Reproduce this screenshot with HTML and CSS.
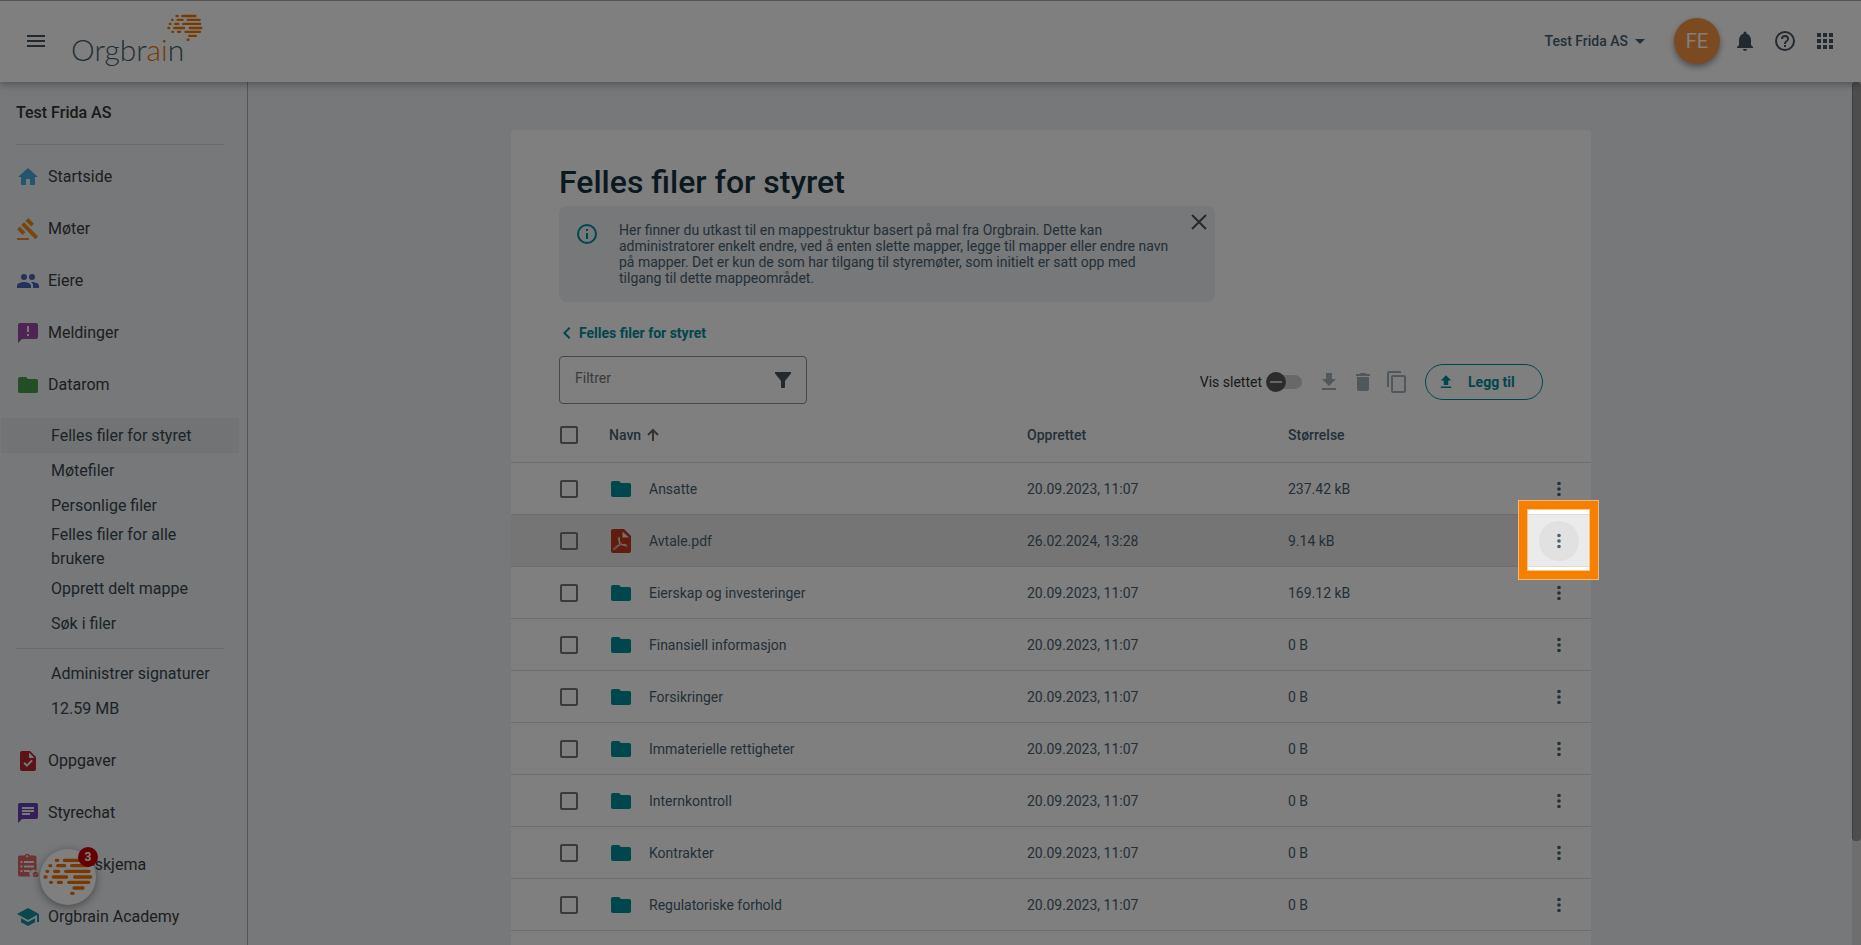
FILE: index.html
```html
<!DOCTYPE html>
<html lang="no">
<head>
<meta charset="utf-8">
<title>Felles filer for styret – Orgbrain</title>
<link rel="stylesheet" href="styles.css">
</head>
<body>
<svg class="defs" aria-hidden="true">
  <symbol id="brain" viewBox="130 415 150 112"><path fill="none" stroke="currentColor" stroke-width="10" stroke-linecap="round" d="M170 421h4M194 421h54M151 437h2M174 437h21M216 437h50M142 454h2M165 454h12M198 454h70M136 471h3M161 471h40M225 471h48M153 487h2M176 487h9M207 487h60M223 504h27M216 520h4"/></symbol>
  <symbol id="folder" viewBox="0 0 24 24"><path d="M10 4H4a2 2 0 0 0-2 2v12a2 2 0 0 0 2 2h16a2 2 0 0 0 2-2V8a2 2 0 0 0-2-2h-8z"/></symbol>
  <symbol id="dots" viewBox="0 0 24 24"><path d="M12 8a2 2 0 1 0 0-4 2 2 0 0 0 0 4zm0 2a2 2 0 1 0 0 4 2 2 0 0 0 0-4zm0 6a2 2 0 1 0 0 4 2 2 0 0 0 0-4z"/></symbol>
</svg>

<header class="topbar">
  <button class="icon-btn" aria-label="Meny"><svg class="icon" viewBox="0 0 24 24"><path d="M3 18h18v-2H3zm0-5h18v-2H3zm0-7v2h18V6z"/></svg></button>
  <a class="logo" href="#" aria-label="Orgbrain"><span>Orgbr<em>ai</em>n</span><svg class="logo-brain"><use href="#brain"/></svg></a>
  <button class="company">Test Frida AS<svg class="icon" viewBox="0 0 24 24"><path d="M7 10l5 5 5-5z"/></svg></button>
  <button class="avatar">FE</button>
  <div class="top-icons">
    <button class="icon-btn" aria-label="Varsler"><svg class="icon" viewBox="0 0 24 24"><path d="M12 22a2 2 0 0 0 2-2h-4a2 2 0 0 0 2 2zm6-6v-5c0-3.07-1.64-5.64-4.5-6.32V4a1.5 1.5 0 0 0-3 0v.68C7.63 5.36 6 7.92 6 11v5l-2 2v1h16v-1z"/></svg></button>
    <button class="icon-btn" aria-label="Hjelp"><svg class="icon" viewBox="0 0 24 24"><path d="M11 18h2v-2h-2zm1-16a10 10 0 1 0 0 20 10 10 0 0 0 0-20zm0 18a8 8 0 1 1 0-16 8 8 0 0 1 0 16zm0-14a4 4 0 0 0-4 4h2a2 2 0 1 1 4 0c0 2-3 1.75-3 5h2c0-2.250 3-2.500 3-5a4 4 0 0 0-4-4z"/></svg></button>
    <button class="icon-btn" aria-label="Apper"><svg class="icon" viewBox="0 0 24 24"><path d="M4 8h4V4H4zm6 12h4v-4h-4zm-6 0h4v-4H4zm0-6h4v-4H4zm6 0h4v-4h-4zm6-10v4h4V4zm-6 4h4V4h-4zm6 6h4v-4h-4zm0 6h4v-4h-4z"/></svg></button>
  </div>
</header>

<div class="layout">
  <nav class="sidebar">
    <h2>Test Frida AS</h2>
    <hr>
    <a class="item" href="#"><svg class="icon c-home" viewBox="0 0 24 24"><path d="M10 20v-6h4v6h5v-8h3L12 3 2 12h3v8z"/></svg>Startside</a>
    <a class="item" href="#"><svg class="icon c-gavel" viewBox="0 0 24 24"><path d="M1 21h12v2H1zM5.240 8.070l2.830-2.830 14.140 14.140-2.830 2.830zM12.320 1l5.660 5.660-2.830 2.830-5.660-5.660zM3.830 9.480l5.660 5.660-2.830 2.830L1 12.310z"/></svg>Møter</a>
    <a class="item" href="#"><svg class="icon c-people" viewBox="0 0 24 24"><path d="M16 11a3 3 0 1 0-3-3 3 3 0 0 0 3 3zm-8 0a3 3 0 1 0-3-3 3 3 0 0 0 3 3zm0 2c-2.330 0-7 1.170-7 3.500V19h14v-2.500C15 14.170 10.330 13 8 13zm8 0c-.290 0-.620.020-.970.050 1.160.840 1.970 1.970 1.970 3.450V19h6v-2.500c0-2.330-4.670-3.500-7-3.500z"/></svg>Eiere</a>
    <a class="item" href="#"><svg class="icon c-msg" viewBox="0 0 24 24"><path d="M20 2H4a2 2 0 0 0-2 2v18l4-4h14a2 2 0 0 0 2-2V4a2 2 0 0 0-2-2z"/><path class="cut" d="M11 13h2v2h-2zM11 5h2v6h-2z"/></svg>Meldinger</a>
    <a class="item" href="#"><svg class="icon c-data"><use href="#folder"/></svg>Datarom</a>
    <div class="submenu">
      <a class="active" href="#">Felles filer for styret</a>
      <a href="#">Møtefiler</a>
      <a href="#">Personlige filer</a>
      <a class="tall" href="#">Felles filer for alle brukere</a>
      <a href="#">Opprett delt mappe</a>
      <a href="#">Søk i filer</a>
      <hr>
      <a href="#">Administrer signaturer</a>
      <a href="#">12.59 MB</a>
    </div>
    <a class="item" href="#"><svg class="icon c-task" viewBox="0 0 24 24"><path d="M14 2H6a2 2 0 0 0-2 2v16a2 2 0 0 0 2 2h12a2 2 0 0 0 2-2V8z"/><path class="cut" d="M10.900 18l-3.500-3.500 1.400-1.400 2.100 2.100 4.500-4.500 1.400 1.400zM13 9V3.500L18.500 9z"/></svg>Oppgaver</a>
    <a class="item" href="#"><svg class="icon c-chat" viewBox="0 0 24 24"><path d="M20 2H4a2 2 0 0 0-2 2v18l4-4h14a2 2 0 0 0 2-2V4a2 2 0 0 0-2-2z"/><path class="cut" d="M6 6h12v2H6zM6 9h12v2H6zM6 12h8v2H6z"/></svg>Styrechat</a>
    <a class="item" href="#"><svg class="icon c-form" viewBox="0 0 24 24"><path fill-rule="evenodd" d="M18.500 2.500H14a3 3 0 0 0-5.500 0H4a2 2 0 0 0-2 2v17a2 2 0 0 0 2 2h10.500a4 4 0 0 1 6-5.500V4.500a2 2 0 0 0-2-2zM11.200 2.200a1 1 0 1 1 0 2 1 1 0 0 1 0-2zM4.500 8h2v2h-2zm0 4.500h2v2h-2zm0 4.500h2v2h-2zM8 8h10v2H8zm0 4.500h10v2H8zM8 17h6v2H8z"/><circle cx="19.500" cy="21.500" r="2.800"/><path d="M18 21.500l1 1 2-2" fill="none" stroke="#edf0f3" stroke-width="1"/></svg>Spørreskjema</a>
    <a class="item" href="#"><svg class="icon c-academy" viewBox="0 0 24 24"><path d="M5 13.180v4L12 21l7-3.820v-4L12 17zM12 3L1 9l11 6 9-4.910V17h2V9z"/></svg>Orgbrain Academy</a>
  </nav>

  <main class="main">
    <section class="card">
      <div class="head">
        <h1>Felles filer for styret</h1>
        <div class="info">
          <svg class="icon info-icon" viewBox="0 0 24 24"><path d="M11 7h2v2h-2zm0 4h2v6h-2zm1-9a10 10 0 1 0 0 20 10 10 0 0 0 0-20zm0 18a8 8 0 1 1 0-16 8 8 0 0 1 0 16z"/></svg>
          <p>Her finner du utkast til en mappestruktur basert på mal fra Orgbrain. Dette kan administratorer enkelt endre, ved å enten slette mapper, legge til mapper eller endre navn på mapper. Det er kun de som har tilgang til styremøter, som initielt er satt opp med tilgang til dette mappeområdet.</p>
          <button class="icon-btn close" aria-label="Lukk"><svg class="icon" viewBox="0 0 24 24"><path d="M5 5l14 14M19 5L5 19" fill="none" stroke="currentColor" stroke-width="2"/></svg></button>
        </div>
        <a class="crumb" href="#"><svg class="icon" viewBox="0 0 24 24"><path d="M15.400 7.400L14 6l-6 6 6 6 1.400-1.400L10.800 12z"/></svg>Felles filer for styret</a>
        <div class="toolbar">
          <label class="filter"><input type="text" placeholder="Filtrer" aria-label="Filtrer"><svg class="icon" viewBox="0 0 24 24"><path d="M4 4h16v1.500L14 13v6a1 1 0 0 1-1 1h-2a1 1 0 0 1-1-1v-6L4 5.500z"/></svg></label>
          <div class="actions">
            <label class="toggle">Vis slettet<input type="checkbox"></label>
            <button class="icon-btn" aria-label="Last ned"><svg class="icon" viewBox="0 0 24 24"><path d="M19 9h-4V3H9v6H5l7 7zM5 18v2h14v-2z"/></svg></button>
            <button class="icon-btn" aria-label="Slett"><svg class="icon" viewBox="0 0 24 24"><path d="M6 19a2 2 0 0 0 2 2h8a2 2 0 0 0 2-2V7H6zM19 4h-3.500l-1-1h-5l-1 1H5v2h14z"/></svg></button>
            <button class="icon-btn" aria-label="Kopier"><svg class="icon" viewBox="0 0 24 24"><path d="M16 1H4a2 2 0 0 0-2 2v14h2V3h12zm3 4H8a2 2 0 0 0-2 2v14a2 2 0 0 0 2 2h11a2 2 0 0 0 2-2V7a2 2 0 0 0-2-2zm0 16H8V7h11z"/></svg></button>
            <button class="add"><svg class="icon" viewBox="0 0 24 24"><path d="M9 16h6v-6h4l-7-7-7 7h4zm-4 2h14v2H5z"/></svg>Legg til</button>
          </div>
        </div>
      </div>
      <table class="files">
        <colgroup><col class="w-check"><col><col class="w-date"><col class="w-size"><col class="w-menu"></colgroup>
        <thead>
          <tr><th class="check"><input type="checkbox" aria-label="Velg alle"></th><th><span class="sort">Navn<svg class="icon" viewBox="0 0 16 16"><path d="M8 14V3M3 8l5-5 5 5" fill="none" stroke="currentColor" stroke-width="2"/></svg></span></th><th>Opprettet</th><th>Størrelse</th><th></th></tr>
        </thead>
        <tbody>
          <tr><td class="check"><input type="checkbox" aria-label="Velg Ansatte"></td><td><span class="name"><svg class="icon"><use href="#folder"/></svg>Ansatte</span></td><td>20.09.2023, 11:07</td><td>237.42 kB</td><td class="menu"><button class="more" aria-label="Mer"><svg class="icon"><use href="#dots"/></svg></button></td></tr>
          <tr class="hover"><td class="check"><input type="checkbox" aria-label="Velg Avtale.pdf"></td><td><span class="name"><svg class="icon pdf" viewBox="0 0 24 24"><path d="M4 0h11l7 7v15a2 2 0 0 1-2 2H4a2 2 0 0 1-2-2V2a2 2 0 0 1 2-2z"/><path class="fold" d="M13.500 2.500v6H20z"/><path class="mark" d="M10.300 8.300c-1.400 0-1 3 .3 5.700-1 2.700-2.400 5-4.300 6-2.300 1.200-2.300-.6.200-2.200 2.800-1.700 7-2.600 10-2.100 2 .4 2 1.500.5 1.300-2.500-.3-5.100-2-6.100-4.300-.7-1.500-.3-4.400-.6-4.400z"/></svg>Avtale.pdf</span></td><td>26.02.2024, 13:28</td><td>9.14 kB</td><td class="menu"><button class="more" aria-label="Mer"><svg class="icon"><use href="#dots"/></svg></button><div class="spotlight"></div></td></tr>
          <tr><td class="check"><input type="checkbox" aria-label="Velg Eierskap og investeringer"></td><td><span class="name"><svg class="icon"><use href="#folder"/></svg>Eierskap og investeringer</span></td><td>20.09.2023, 11:07</td><td>169.12 kB</td><td class="menu"><button class="more" aria-label="Mer"><svg class="icon"><use href="#dots"/></svg></button></td></tr>
          <tr><td class="check"><input type="checkbox" aria-label="Velg Finansiell informasjon"></td><td><span class="name"><svg class="icon"><use href="#folder"/></svg>Finansiell informasjon</span></td><td>20.09.2023, 11:07</td><td>0 B</td><td class="menu"><button class="more" aria-label="Mer"><svg class="icon"><use href="#dots"/></svg></button></td></tr>
          <tr><td class="check"><input type="checkbox" aria-label="Velg Forsikringer"></td><td><span class="name"><svg class="icon"><use href="#folder"/></svg>Forsikringer</span></td><td>20.09.2023, 11:07</td><td>0 B</td><td class="menu"><button class="more" aria-label="Mer"><svg class="icon"><use href="#dots"/></svg></button></td></tr>
          <tr><td class="check"><input type="checkbox" aria-label="Velg Immaterielle rettigheter"></td><td><span class="name"><svg class="icon"><use href="#folder"/></svg>Immaterielle rettigheter</span></td><td>20.09.2023, 11:07</td><td>0 B</td><td class="menu"><button class="more" aria-label="Mer"><svg class="icon"><use href="#dots"/></svg></button></td></tr>
          <tr><td class="check"><input type="checkbox" aria-label="Velg Internkontroll"></td><td><span class="name"><svg class="icon"><use href="#folder"/></svg>Internkontroll</span></td><td>20.09.2023, 11:07</td><td>0 B</td><td class="menu"><button class="more" aria-label="Mer"><svg class="icon"><use href="#dots"/></svg></button></td></tr>
          <tr><td class="check"><input type="checkbox" aria-label="Velg Kontrakter"></td><td><span class="name"><svg class="icon"><use href="#folder"/></svg>Kontrakter</span></td><td>20.09.2023, 11:07</td><td>0 B</td><td class="menu"><button class="more" aria-label="Mer"><svg class="icon"><use href="#dots"/></svg></button></td></tr>
          <tr><td class="check"><input type="checkbox" aria-label="Velg Regulatoriske forhold"></td><td><span class="name"><svg class="icon"><use href="#folder"/></svg>Regulatoriske forhold</span></td><td>20.09.2023, 11:07</td><td>0 B</td><td class="menu"><button class="more" aria-label="Mer"><svg class="icon"><use href="#dots"/></svg></button></td></tr>
        </tbody>
      </table>
    </section>
  </main>
  <div class="scroll"><div class="thumb"></div></div>
</div>

<button class="chat" aria-label="Chat"><svg><use href="#brain"/></svg><span class="badge">3</span></button>
</body>
</html>
```
FILE: styles.css
```css
* { box-sizing: border-box; }
html, body { height: 100%; }
body {
  margin: 0;
  display: flex;
  flex-direction: column;
  overflow: hidden;
  background: #edf0f4;
  color: #486070;
  font: 14px/20px Roboto, "Liberation Sans", sans-serif;
}
button { font: inherit; color: inherit; background: none; border: 0; padding: 0; margin: 0; }
a { color: inherit; text-decoration: none; }
hr { border: 0; border-top: 1px solid #cfd2d5; margin: 0; }
.defs { position: absolute; width: 0; height: 0; }
.icon { width: 24px; height: 24px; fill: currentColor; display: block; flex: none; }
.icon-btn { display: block; color: #455560; flex: none; }

.topbar {
  flex: none;
  display: flex;
  align-items: center;
  height: 82px;
  padding: 0 24px 2px;
  background: #fff;
  border-top: 1px solid #a8a8a8;
  box-shadow: 0 2px 8px rgba(0, 0, 0, .35);
  position: relative;
  z-index: 5;
}
.logo { display: flex; margin-left: 23px; color: #455f6e; font: 300 30px/36px Lato, sans-serif; }
.logo span { padding-top: 17px; }
.logo em { font-style: normal; color: #ee7500; }
.logo-brain { width: 36px; height: 28px; margin-left: -17px; color: #ee7500; }
.company { margin-left: auto; display: flex; align-items: center; font-weight: 500; }
.avatar {
  width: 46px; height: 46px; border-radius: 50%; margin: 0 13px 0 22px;
  background: #f79540; color: #fff; font-size: 20px;
  box-shadow: 0 3px 6px rgba(0, 0, 0, .4);
}
.top-icons { display: flex; gap: 16px; }

.layout { flex: 1; min-height: 0; display: flex; }
.sidebar { flex: none; width: 248px; border-right: 1px solid #a9abad; color: #3a3d3f; font-size: 16px; line-height: 24px; }
.sidebar h2 { margin: 0; padding: 19px 16px 19px; font-size: 16px; font-weight: 500; line-height: 24px; color: #333; }
.sidebar hr { margin: 0 23px 6px 16px; }
.item { display: flex; align-items: center; gap: 8px; height: 52px; padding-left: 16px; }
.submenu { padding: 7px 8px 9px 1px; color: #37474f; }
.submenu a { display: flex; align-items: center; min-height: 35px; padding: 0 40px 0 50px; }
.submenu a:not(.tall) { padding-right: 0; }
.submenu .active { background: #e4e7e9; }
.submenu hr { margin: 7px 15px 7px; }
.cut { fill: #edf0f4; }
.c-home { color: #48a9dc; }
.c-gavel { color: #f08a1c; }
.c-people { color: #4b63b8; }
.c-msg { color: #9b48a8; }
.c-data { color: #479a4b; }
.c-task { color: #b9272f; }
.c-chat { color: #6a3fb0; }
.c-form { color: #dc6464; }
.c-academy { color: #158e9c; }

.main { flex: 1; min-width: 0; padding: 48px 0 0; margin-right: -2px; }
.card { width: 1080px; max-width: 100%; min-height: 100%; margin: 0 auto; background: #fff; border-radius: 4px 4px 0 0; }
.head { padding: 32px 48px 0; }
h1 { margin: 0 0 4px; font-size: 32px; line-height: 40px; font-weight: 500; color: #15333e; }
.info { display: flex; align-items: flex-start; max-width: 656px; padding: 4px 4px 4px 16px; background: #edf0f4; border-radius: 8px; }
.info-icon { margin: 12px 20px 0 0; color: #008c9a; }
.info p { flex: 1; margin: 0; padding: 12px 12px 12px 0; line-height: 16px; }
.crumb { display: flex; align-items: center; width: max-content; height: 24px; margin-top: 19px; color: #008c9a; font-weight: 700; }
.crumb .icon { margin: 0 0 0 -4px; }
.toolbar { display: flex; justify-content: space-between; align-items: flex-end; margin-top: 11px; }
.filter { display: flex; align-items: center; width: 248px; height: 48px; padding: 0 11px 0 15px; border: 1px solid #919191; border-radius: 4px; color: #455560; }
.filter input { flex: 1; min-width: 0; border: 0; padding: 0 0 4px; outline: 0; background: none; font: inherit; }
.filter input::placeholder { color: #757575; opacity: 1; }
.actions { display: flex; align-items: center; gap: 10px; padding-bottom: 4px; }
.actions .icon-btn { color: #a3b0b7; }
.toggle { display: flex; align-items: center; gap: 4px; margin-right: 5px; color: #333; }
.toggle input {
  appearance: none; margin: 0; width: 36px; height: 20px; border-radius: 10px;
  display: flex; align-items: center; position: relative;
}
.toggle input::after { content: ""; width: 28px; height: 14px; margin-left: -12px; border-radius: 7px; background: #d0d0d0; }
.toggle input::before {
  content: ""; flex: none; width: 20px; height: 20px; border-radius: 50%; position: relative; z-index: 1;
  background: linear-gradient(#ccc, #ccc) center / 12px 2px no-repeat #585858;
}
.add { display: flex; align-items: center; gap: 10px; width: 118px; height: 36px; margin-left: 6px; padding-left: 8px; border: 1px solid #008c9a; border-radius: 18px; color: #008c9a; font-weight: 700; }
.add .icon { height: 18px; }

.files { width: 100%; margin-top: 4px; border-collapse: separate; border-spacing: 0; table-layout: fixed; }
.w-check { width: 98px; }
.w-date { width: 261px; }
.w-size { width: 239px; }
.w-menu { width: 64px; }
.files th { height: 55px; padding: 0; text-align: left; font-weight: 500; border-bottom: 1px solid #dcdcdc; }
.files td { height: 52px; padding: 0; border-bottom: 1px solid #dcdcdc; }
.files .check { padding-left: 49px; }
.check input { appearance: none; display: block; margin: 0; width: 18px; height: 18px; border: 2px solid #757575; border-radius: 2px; }
.sort { display: flex; align-items: center; gap: 4px; }
.sort .icon { width: 16px; height: 16px; color: #666; }
.name { display: flex; align-items: center; gap: 16px; }
.name .icon { color: #008c9a; }
.name .pdf { color: #c0391b; }
.fold { fill: #e8e0de; }
.mark { fill: none; stroke: #e8e0de; stroke-width: 1; }
.hover { background: #ebebeb; }
.files .menu { position: relative; }
.more { display: grid; place-items: center; width: 40px; height: 40px; margin-left: 12px; border-radius: 50%; }
.more .icon { width: 22px; height: 22px; }
.hover .more { background: #e1e1e1; }
/* Guide marker: orange frame round the active control, everything else dimmed */
.spotlight {
  position: absolute; z-index: 20; inset: -15px -8px -14px -9px;
  border: 10px solid #f77f00;
  outline: 1px solid #f5b877; outline-offset: -1px;
  box-shadow: 0 0 0 3000px rgba(0, 0, 0, .5);
}
.spotlight::before { content: ""; position: absolute; inset: -1px; border: 1px solid #fbc58c; }

.scroll { flex: none; width: 9px; background: #dcdcdc; position: relative; z-index: 1; }
.thumb { height: 88%; background: #9b9b9b; border-left: 1px solid #7d7f80; border-radius: 4px; }

.chat {
  position: fixed; z-index: 6; left: 40px; bottom: 40px; width: 56px; height: 56px;
  display: grid; place-items: center; border-radius: 50%; background: #fff; color: #f37000;
  box-shadow: 0 2px 8px rgba(0, 0, 0, .4);
}
.chat svg { width: 50px; height: 38px; }
.badge { position: absolute; top: -2px; right: -2px; width: 20px; height: 20px; border-radius: 50%; background: #c80000; color: #fff; font-size: 12px; font-weight: 700; line-height: 20px; }
```
